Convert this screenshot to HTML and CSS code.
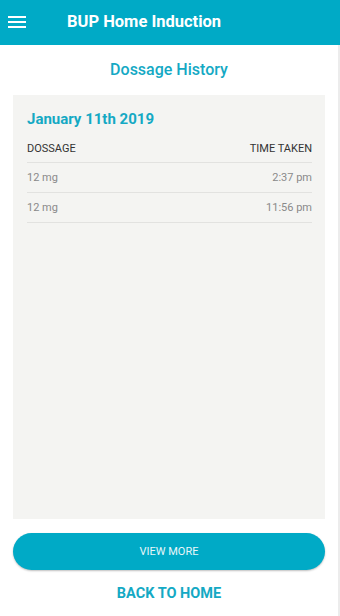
FILE: index.html
```html
<!DOCTYPE html>
<html>
<head>
<meta charset="utf-8">
<link rel="stylesheet" href="styles.css">
</head>
<body>
<div class="app">
  <header class="topbar">
    <svg class="menu" width="18" height="14" viewBox="0 0 18 14">
      <rect x="0" y="1" width="18" height="2" fill="#fff"/>
      <rect x="0" y="6" width="18" height="2" fill="#fff"/>
      <rect x="0" y="11" width="18" height="2" fill="#fff"/>
    </svg>
    <span class="title">BUP Home Induction</span>
  </header>
  <main class="content">
    <h1 class="page-title">Dossage History</h1>
    <section class="card">
      <h2 class="date">January 11th 2019</h2>
      <div class="row head"><span>DOSSAGE</span><span>TIME TAKEN</span></div>
      <div class="row"><span>12 mg</span><span>2:37 pm</span></div>
      <div class="row"><span>12 mg</span><span>11:56 pm</span></div>
    </section>
    <button class="btn">VIEW MORE</button>
    <a class="back">BACK TO HOME</a>
  </main>
</div>
</body>
</html>
```
FILE: styles.css
```css
html, body { margin: 0; padding: 0; }
body { font-family: Roboto, "Liberation Sans", sans-serif; background: #fff; width: 340px; height: 616px; overflow: hidden; }
.app { display: flex; flex-direction: column; height: 616px; }
.topbar { height: 45px; background: #00aac6; display: flex; align-items: center; padding-left: 8px; box-sizing: border-box; flex: none; }
.menu { display: block; margin-top: -2px; }
.title { color: #fff; font-weight: 700; font-size: 16.5px; margin-left: 41px; margin-top: -2px; }
.content { flex: 1; display: flex; flex-direction: column; padding: 0 13px 0 13px; border-right: 2px solid #ececec; }
.page-title { margin: 15px 0 0; height: 20px; text-align: center; color: #14a9c4; font-size: 16px; font-weight: 500; line-height: 20px; }
.card { background: #f4f4f2; margin-top: 15px; height: 424px; padding: 14px 13px 0 14px; box-sizing: border-box; }
.date { margin: 0; color: #14a9c4; font-size: 15px; font-weight: 700; line-height: 20px; height: 20px; }
.row { display: flex; justify-content: space-between; font-size: 11px; color: #8a8a8a; height: 29px; align-items: center; border-bottom: 1px solid #e2e2e0; }
.row.head { color: #333; margin-top: 5px; height: 28px; }
.btn { margin-top: 14px; height: 37px; border: none; border-radius: 19px; background: #00aac6; color: #e8f7fa; font-family: Roboto, "Liberation Sans", sans-serif; font-size: 11px; box-shadow: 0 1px 2px rgba(0,0,0,0.25); flex: none; }
.back { margin-top: 15px; text-align: center; color: #14a9c4; font-size: 14.5px; font-weight: 700; line-height: 18px; }
```
